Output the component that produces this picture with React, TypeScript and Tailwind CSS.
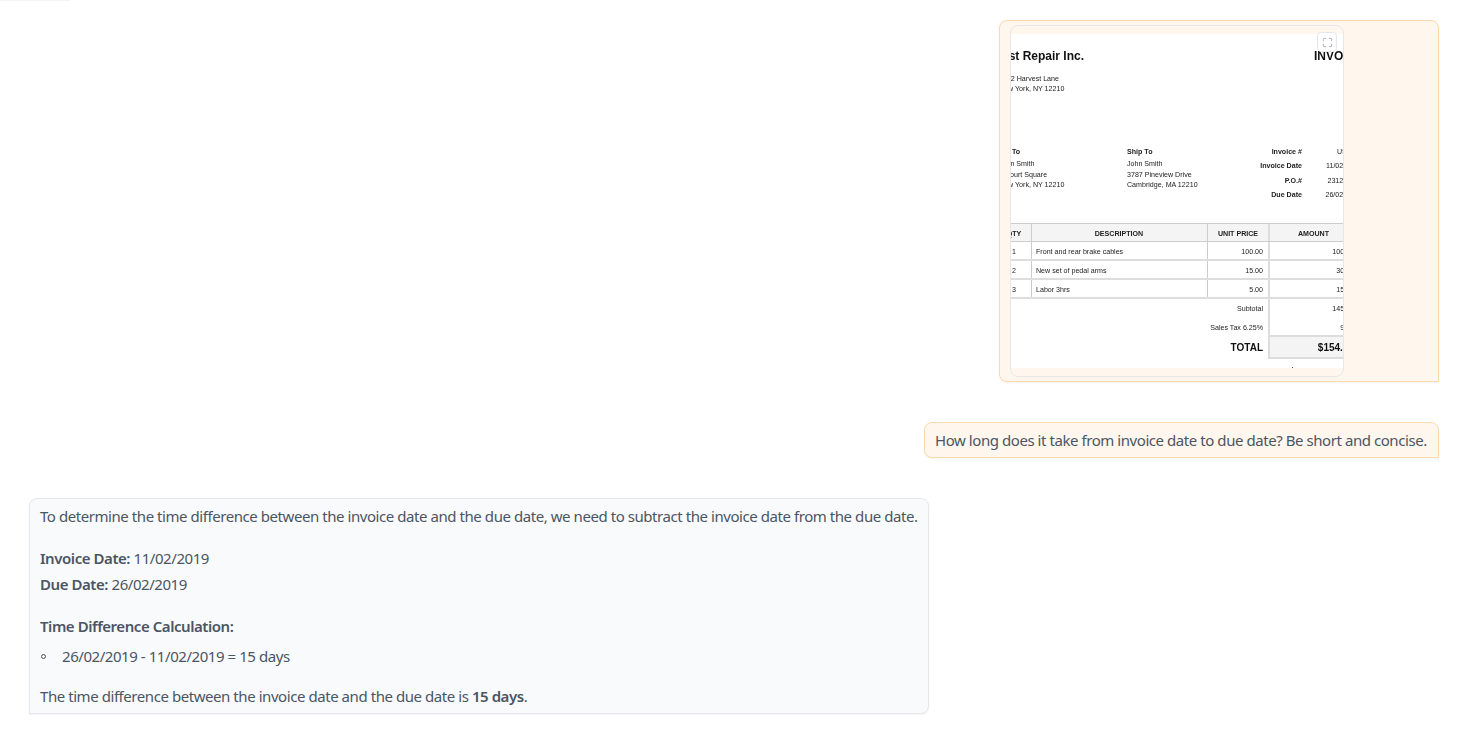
import React from "react";
import { Maximize } from "lucide-react";

const inv = "font-['Liberation_Sans',Arial,sans-serif]";
const rows = [
  ["1", "Front and rear brake cables", "100.00", "100.00"],
  ["2", "New set of pedal arms", "15.00", "30.00"],
  ["3", "Labor 3hrs", "5.00", "15.00"],
];

function Invoice() {
  return (
    <div className={`${inv} -ml-[17px] w-[400px] h-[334px] shrink-0 bg-white text-[#222] text-[7.1px] leading-[10.4px] blur-[0.25px]`}>
      <div className="flex justify-between pt-[15px] pr-[29px] text-[12px] leading-[14px] font-bold text-[#111]">
        <span>East Repair Inc.</span>
        <span className="w-[51px]">INVOICE</span>
      </div>
      <div className="mt-[11px] pl-[5px]">
        <div>1912 Harvest Lane</div>
        <div>New York, NY 12210</div>
      </div>
      <div className="flex mt-[52px] h-[67px]">
        <div className="w-[133px] pl-[5px]">
          <div className="font-bold mb-[2px]">Bill To</div>
          <div>John Smith</div>
          <div>2 Court Square</div>
          <div>New York, NY 12210</div>
        </div>
        <div className="w-[120px]">
          <div className="font-bold mb-[2px]">Ship To</div>
          <div>John Smith</div>
          <div>3787 Pineview Drive</div>
          <div>Cambridge, MA 12210</div>
        </div>
        <div className="w-[55px] text-right font-bold leading-[14.4px] -mt-[2px] whitespace-nowrap">
          <div>Invoice #</div>
          <div>Invoice Date</div>
          <div>P.O.#</div>
          <div>Due Date</div>
        </div>
        <div className="w-[59px] text-right leading-[14.4px] -mt-[2px] whitespace-nowrap">
          <div>US-001</div>
          <div>11/02/2019</div>
          <div>2312/2019</div>
          <div>26/02/2019</div>
        </div>
      </div>
      <div className="mt-[9px]">
        <div className="flex h-[19px] items-center bg-[#f4f4f4] border-y border-[#ccc] font-bold text-center">
          <div className="w-[38px] pl-[3px] border-r border-[#ccc] h-full leading-[20px]">QTY</div>
          <div className="w-[176px] pr-[1px] border-r border-[#ccc] h-full leading-[20px]">DESCRIPTION</div>
          <div className="w-[62px] border-r-2 border-[#ddd] h-full leading-[20px]">UNIT PRICE</div>
          <div className="w-[87px] h-full leading-[20px]">AMOUNT</div>
        </div>
        {rows.map((r) => (
          <div key={r[0]} className="flex h-[19px] border-b-2 border-[#ddd] leading-[20px]">
            <div className="w-[38px] pl-[18px] border-r border-[#ccc]">{r[0]}</div>
            <div className="w-[176px] pl-[4px] border-r border-[#ccc]">{r[1]}</div>
            <div className="w-[62px] pr-[5px] text-right border-r-2 border-[#ddd]">{r[2]}</div>
            <div className="w-[84px] text-right">{r[3]}</div>
          </div>
        ))}
        <div className="flex h-[19px] leading-[20px]">
          <div className="w-[274px] pr-[5px] text-right">Subtotal</div>
          <div className="w-[2px] bg-[#ddd]" />
          <div className="w-[84px] text-right">145.00</div>
        </div>
        <div className="flex h-[17px] leading-[20px]">
          <div className="w-[274px] pr-[5px] text-right">Sales Tax 6.25%</div>
          <div className="w-[2px] bg-[#ddd]" />
          <div className="w-[84px] text-right">9.06</div>
        </div>
        <div className="flex h-[24px] font-bold text-[10px] leading-[26px] text-[#111]">
          <div className="w-[274px] pr-[5px] text-right">TOTAL</div>
          <div className="w-[95px] pr-[9px] text-right bg-[#f4f4f4] border-y-2 border-l-2 border-[#ddd] leading-[22px]">$154.06</div>
        </div>
        <div className="ml-[298px] mt-[8px] w-px h-px bg-[#555]" />
      </div>
    </div>
  );
}

export default function App() {
  return (
    <div className="relative min-h-[730px] bg-white flex flex-col font-['Noto_Sans',sans-serif] text-[#4b5563] text-[15px] leading-[26px] tracking-[-0.44px]">
      <div className="absolute top-0 left-0 w-[70px] h-px bg-[#f3f4f6]" />

      <div className="self-end mt-[20px] mr-[21px] w-[440px] h-[362px] rounded-t-lg rounded-bl-lg border border-[#fbd9a8] bg-[#fff7ed] pt-[4px] pl-[10px] shadow-xs">
        <div className="relative w-[334px] h-[352px] rounded-lg border border-[#e5e7eb] overflow-hidden flex items-center tracking-normal">
          <Invoice />
          <button className="absolute top-[6px] right-[6px] w-[20px] h-[20px] flex items-center justify-center rounded-[4px] bg-white border border-[#e5e7eb] text-[#6b7280]">
            <Maximize size={11} strokeWidth={1.2} />
          </button>
        </div>
      </div>

      <div className="self-end mt-[40px] mr-[21px] w-[515px] h-[36px] flex items-center pl-[10px] rounded-t-lg rounded-bl-lg border border-[#fbd9a8] bg-[#fff7ed] whitespace-nowrap shadow-xs">
        How long does it take from invoice date to due date? Be short and concise.
      </div>

      <div className="ml-[29px] mt-[40px] w-[900px] h-[216px] px-[10px] pt-[4px] rounded-t-lg rounded-br-lg border border-[#e5e7eb] bg-[#f9fafb] whitespace-nowrap shadow-xs">
        <p>To determine the time difference between the invoice date and the due date, we need to subtract the invoice date from the due date.</p>
        <p className="mt-[16px]"><strong className="font-semibold">Invoice Date:</strong> 11/02/2019</p>
        <p><strong className="font-semibold">Due Date:</strong> 26/02/2019</p>
        <p className="mt-[16px] font-semibold">Time Difference Calculation:</p>
        <ul className="mt-[4px]">
          <li className="flex items-center">
            <span className="ml-[1px] mr-[16px] w-[5px] h-[5px] rounded-full border border-[#4b5563]" />
            <span>26/02/2019 - 11/02/2019 = 15 days</span>
          </li>
        </ul>
        <p className="mt-[14px]">The time difference between the invoice date and the due date is <strong className="font-semibold">15 days</strong>.</p>
      </div>
    </div>
  );
}
